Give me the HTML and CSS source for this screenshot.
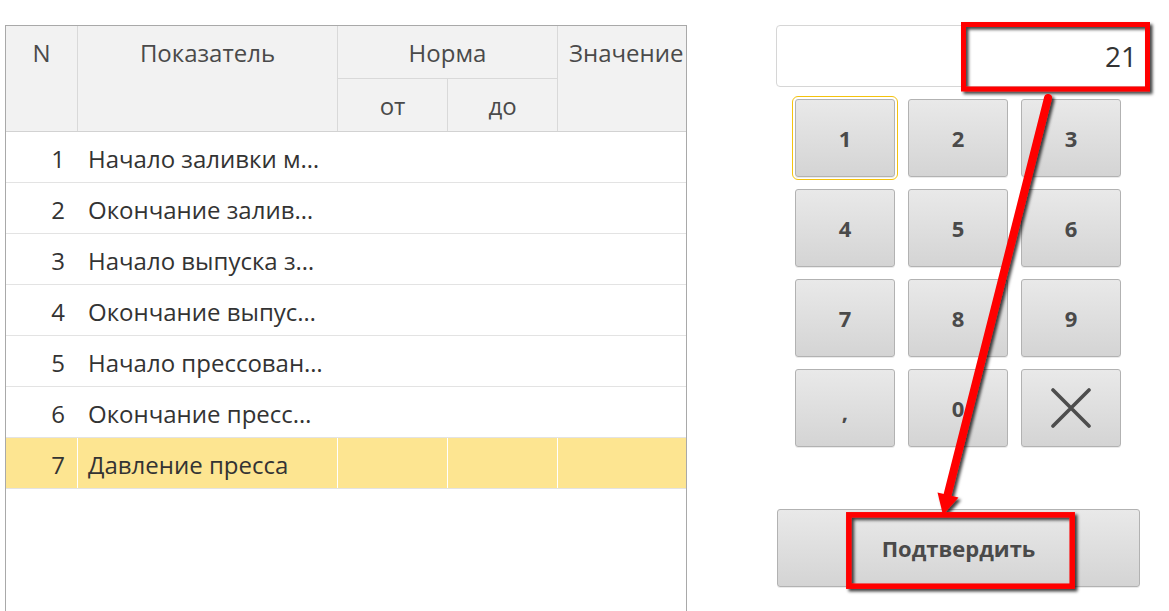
FILE: index.html
```html
<!DOCTYPE html>
<html lang="ru">
<head>
<meta charset="utf-8">
<title>Ввод значения</title>
<link rel="stylesheet" href="styles.css">
</head>
<body>
<div class="page">
  <div class="grid-panel">
    <div class="head">
      <div class="hcell span2">N</div>
      <div class="hcell span2">Показатель</div>
      <div class="hcell norm">Норма</div>
      <div class="hcell span2 left">Значение</div>
      <div class="hcell sub">от</div>
      <div class="hcell sub">до</div>
    </div>
    <div class="row"><div class="c num">1</div><div class="c name">Начало заливки м…</div><div class="c"></div><div class="c"></div><div class="c"></div></div>
    <div class="row"><div class="c num">2</div><div class="c name">Окончание залив…</div><div class="c"></div><div class="c"></div><div class="c"></div></div>
    <div class="row"><div class="c num">3</div><div class="c name">Начало выпуска з…</div><div class="c"></div><div class="c"></div><div class="c"></div></div>
    <div class="row"><div class="c num">4</div><div class="c name">Окончание выпус…</div><div class="c"></div><div class="c"></div><div class="c"></div></div>
    <div class="row"><div class="c num">5</div><div class="c name">Начало прессован…</div><div class="c"></div><div class="c"></div><div class="c"></div></div>
    <div class="row"><div class="c num">6</div><div class="c name">Окончание пресс…</div><div class="c"></div><div class="c"></div><div class="c"></div></div>
    <div class="row selected"><div class="c num">7</div><div class="c name">Давление пресса</div><div class="c"></div><div class="c"></div><div class="c"></div></div>
  </div>

  <div class="pad-panel">
    <div class="display">21</div>
    <div class="keys">
      <button class="key focused">1</button>
      <button class="key">2</button>
      <button class="key">3</button>
      <button class="key">4</button>
      <button class="key">5</button>
      <button class="key">6</button>
      <button class="key">7</button>
      <button class="key">8</button>
      <button class="key">9</button>
      <button class="key comma">,</button>
      <button class="key">0</button>
      <button class="key clear" aria-label="Удалить">
        <svg width="40" height="40" viewBox="0 0 40 40"><path d="M2 2 L38 38 M38 2 L2 38" stroke="#4d4d4d" stroke-width="3.6" stroke-linecap="round" fill="none"/></svg>
      </button>
    </div>
    <button class="confirm">Подтвердить</button>
  </div>
</div>

<svg class="annot" width="1169" height="611" viewBox="0 0 1169 611">
  <defs>
    <filter id="sh" x="-20%" y="-20%" width="140%" height="140%">
      <feDropShadow dx="2.5" dy="2.5" stdDeviation="1.6" flood-color="#000" flood-opacity="0.75"/>
    </filter>
  </defs>
  <g filter="url(#sh)">
    <rect x="963.5" y="24.5" width="184" height="64.5" fill="none" stroke="#ff0000" stroke-width="5"/>
    <rect x="848.8" y="514.8" width="223.4" height="71.4" fill="none" stroke="#ff0000" stroke-width="5.5"/>
    <line x1="1048" y1="98" x2="947" y2="497" stroke="#ff0000" stroke-width="8" stroke-linecap="round"/>
    <polygon points="943,515 958.5,497.5 937.5,492.5" fill="#ff0000"/>
  </g>
</svg>
</body>
</html>
```

FILE: styles.css
```css
* { box-sizing: border-box; }

html, body {
  margin: 0;
  padding: 0;
  background: #ffffff;
  overflow: hidden;
}

body {
  width: 1169px;
  height: 611px;
  font-family: "Open Sans", "Noto Sans", sans-serif;
  color: #333333;
  position: relative;
}

.page {
  display: flex;
  align-items: flex-start;
  padding: 25px 0 0 5px;
}

/* ---------- table ---------- */
.grid-panel {
  width: 682px;
  height: 600px;
  border: 1px solid #a9a9a9;
  border-bottom: none;
  overflow: hidden;
  flex: none;
}

.head {
  display: grid;
  grid-template-columns: 71px 259px 109px 109px 200px;
  grid-template-rows: 52px 52px;
  column-gap: 1px;
  row-gap: 1px;
  background: #d9d9d9;
  border-bottom: 1px solid #d2d2d2;
}

.hcell {
  background: #f2f2f2;
  color: #4a4a4a;
  font-size: 24px;
  display: flex;
  align-items: center;
  justify-content: center;
  white-space: nowrap;
  overflow: hidden;
}

.hcell.span2 {
  grid-row: span 2;
  align-items: flex-start;
  line-height: 54px;
}

.hcell.left {
  justify-content: flex-start;
  padding-left: 11px;
}

.hcell.norm { grid-column: span 2; }

.hcell.sub { padding-top: 1px; }

.row {
  display: grid;
  grid-template-columns: 71px 259px 109px 109px 200px;
  column-gap: 1px;
  height: 51px;
  border-bottom: 1px solid #e3e3e3;
  background: #ffffff;
}

.c {
  display: flex;
  align-items: center;
  font-size: 24px;
  color: #333333;
  white-space: nowrap;
  overflow: hidden;
  padding-top: 2px;
}

.c.num {
  justify-content: flex-end;
  padding-right: 12px;
}

.c.name {
  padding-left: 10px;
}

.row.selected .c { background: #fde591; }

/* ---------- keypad ---------- */
.pad-panel {
  margin-left: 89px;
  width: 374px;
  flex: none;
}

.display {
  height: 62px;
  border: 1px solid #d6d6d6;
  border-radius: 4px;
  background: #ffffff;
  font-size: 28px;
  color: #333333;
  display: flex;
  align-items: center;
  justify-content: flex-end;
  padding-right: 12px;
}

.keys {
  display: grid;
  grid-template-columns: repeat(3, 100px);
  grid-auto-rows: 78px;
  column-gap: 13px;
  row-gap: 12px;
  margin-top: 12px;
  padding-left: 19px;
}

.key, .confirm {
  font-family: "Open Sans", "Noto Sans", sans-serif;
  font-weight: 700;
  font-size: 22px;
  color: #4a4a4a;
  border: 1px solid #b2b2b2;
  border-radius: 3px;
  background: linear-gradient(#e9e9e9, #d4d4d4);
  box-shadow: 0 1px 0 rgba(0, 0, 0, 0.08);
  padding: 0;
  display: flex;
  align-items: center;
  justify-content: center;
}

.key.focused {
  outline: 1px solid #f4c20d;
  outline-offset: 2px;
}

.key.comma { padding-top: 6px; }

.confirm {
  width: 363px;
  height: 78px;
  margin-top: 62px;
  margin-left: 1px;
}

/* ---------- annotation overlay ---------- */
.annot {
  position: absolute;
  left: 0;
  top: 0;
  pointer-events: none;
}
```
